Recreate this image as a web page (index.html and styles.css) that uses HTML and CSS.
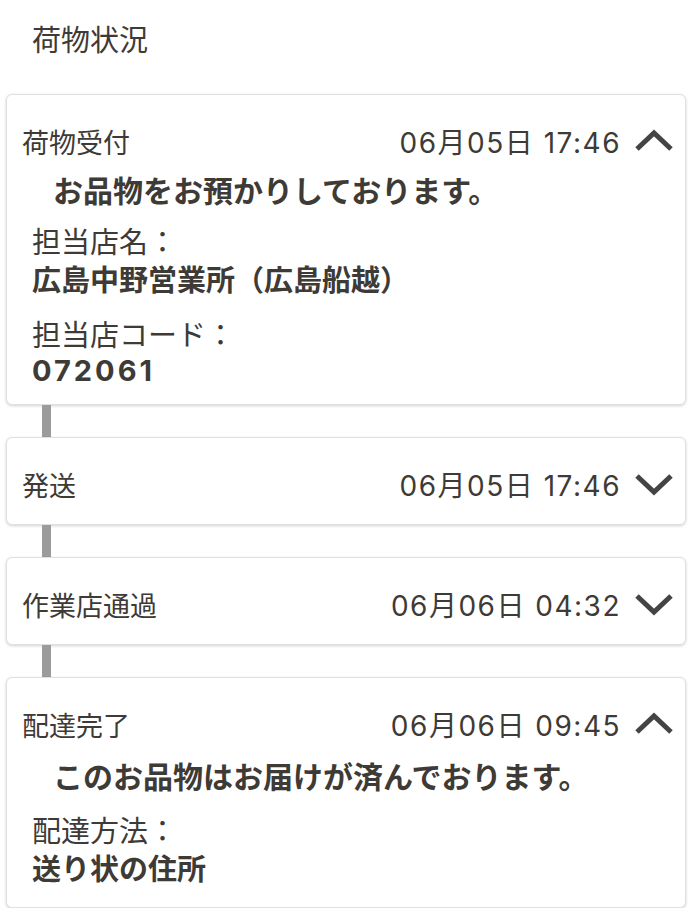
FILE: index.html
```html
<!DOCTYPE html>
<html lang="ja">
  <head>
    <meta charset="UTF-8" />
    <meta name="viewport" content="width=device-width, initial-scale=1.0" />
    <title>荷物状況</title>
    <link rel="stylesheet" href="styles.css">
  </head>
  <body>
    <h1 class="page-title">荷物状況</h1>

    <div class="timeline">
      <!-- 荷物受付 -->
      <div class="event">
        <div class="event-head">
          <span class="event-name">荷物受付</span>
          <span class="event-time">06月05日 17:46</span>
          <svg class="chev" viewBox="0 0 40 24"><polyline points="3,20 20,4 37,20" /></svg>
        </div>
        <p class="event-msg">お品物をお預かりしております。</p>
        <dl class="event-info">
          <dt>担当店名：</dt>
          <dd>広島中野営業所（広島船越）</dd>
          <dt>担当店コード：</dt>
          <dd class="num">072061</dd>
        </dl>
      </div>
      <div class="link"></div>

      <!-- 発送 -->
      <div class="event">
        <div class="event-head">
          <span class="event-name">発送</span>
          <span class="event-time">06月05日 17:46</span>
          <svg class="chev" viewBox="0 0 40 24"><polyline points="3,4 20,20 37,4" /></svg>
        </div>
      </div>
      <div class="link"></div>

      <!-- 作業店通過 -->
      <div class="event">
        <div class="event-head">
          <span class="event-name">作業店通過</span>
          <span class="event-time">06月06日 04:32</span>
          <svg class="chev" viewBox="0 0 40 24"><polyline points="3,4 20,20 37,4" /></svg>
        </div>
      </div>
      <div class="link"></div>

      <!-- 配達完了 -->
      <div class="event event-done">
        <div class="event-head">
          <span class="event-name">配達完了</span>
          <span class="event-time">06月06日 09:45</span>
          <svg class="chev" viewBox="0 0 40 24"><polyline points="3,20 20,4 37,20" /></svg>
        </div>
        <p class="event-msg">このお品物はお届けが済んでおります。</p>
        <dl class="event-info">
          <dt>配達方法：</dt>
          <dd>送り状の住所</dd>
        </dl>
      </div>
    </div>
  </body>
</html>
```

FILE: styles.css
```css
* {
  margin: 0;
  padding: 0;
}
body {
  background-color: #fff;
  color: #3e3a35;
  font-family: "Noto Sans CJK JP", "Noto Sans", sans-serif;
}
.page-title {
  font-size: 29px;
  font-weight: 400;
  line-height: 40px;
  padding: 18px 0 0 32px;
  height: 76px;
}
.timeline {
  margin: 0 8px 0 6px;
}
.event {
  background-color: #fff;
  border: 1px solid #e0e0e0;
  border-radius: 6px;
  box-shadow: 0 1px 3px rgba(0, 0, 0, 0.18);
  padding: 26px 11px 20px 15px;
}
.event-head {
  display: flex;
  align-items: center;
  height: 40px;
}
.event-name {
  font-size: 27px;
  flex: 1;
}
/* 数字は幅の広いフォントで */
.event-time {
  font-family: Inter, "Noto Sans CJK JP", sans-serif;
  font-size: 28px;
  letter-spacing: 1.5px;
  margin-right: 13px;
}
.chev {
  width: 40px;
  height: 24px;
}
.chev polyline {
  fill: none;
  stroke: #444;
  stroke-width: 5;
}
.event-msg {
  font-size: 30px;
  font-weight: 700;
  line-height: 40px;
  margin: 8px 0 0 31px;
}
.event-info {
  margin: 12px 0 0 10px;
  font-size: 29px;
  line-height: 38px;
}
.event-info dd {
  font-weight: 700;
  margin-bottom: 17px;
}
.event-info dd:last-child {
  margin-bottom: -6px;
}
.event-info .num {
  font-family: Inter, "Noto Sans CJK JP", sans-serif;
  letter-spacing: 3px;
}
.event-done .event-msg {
  margin-top: 11px;
}
.event-done .event-info {
  margin-top: 15px;
}
.event-done .event-info dd:last-child {
  margin-bottom: 1px;
}
/* カード同士をつなぐ線 */
.link {
  width: 9px;
  height: 32px;
  margin-left: 36px;
  background-color: #9b9b9b;
}
```
